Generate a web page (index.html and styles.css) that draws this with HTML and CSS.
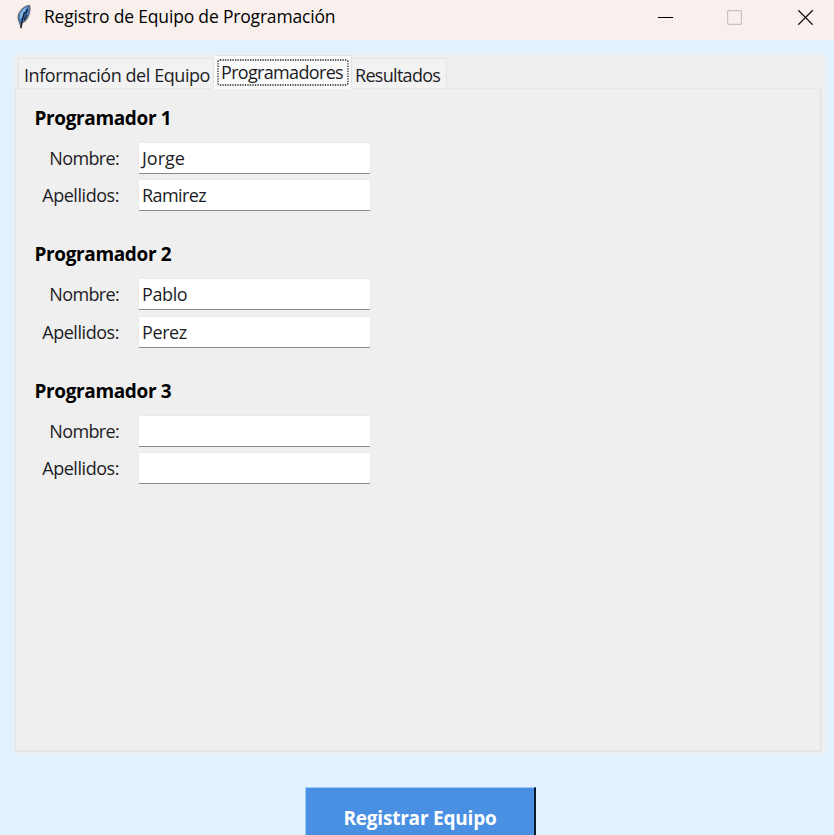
FILE: index.html
```html
<!DOCTYPE html>
<html lang="es">
<head>
<meta charset="utf-8">
<title>Registro de Equipo de Programación</title>
<link rel="stylesheet" href="styles.css">
</head>
<body>
<div class="window">
  <header class="titlebar">
    <svg class="feather" width="16" height="26" viewBox="0 0 16 26">
      <path d="M13.200 1.300C8.200 2 3.500 6.500 2.200 12c-.6 3 .3 5 1.500 7L5 23l1-4c4-2 6-5 7-9 .8-3 1.400-7 .2-8.700z" fill="#3f7fcd" stroke="#69696c" stroke-width="1.300"/>
      <path d="M4 10c1-3 4-6 7-7L7 12l-3 4z" fill="#7fb0e6"/>
      <path d="M11.500 5L9.500 10M8.500 8L7 14M10.500 11l-2.500 5M6.500 14l-1.500 10" fill="none" stroke="#18222f" stroke-width="1.400"/>
    </svg>
    <h1 class="title">Registro de Equipo de Programación</h1>
    <svg class="controls" width="156" height="16" viewBox="0 0 156 16" fill="none">
      <path d="M0 8.500H15" stroke="#000"/>
      <rect x="69.600" y="1.600" width="13.800" height="13.800" rx="1" stroke="#c9c2c1" stroke-width="1.200"/>
      <path d="M140.300 1.300l14.400 14.400M154.700 1.300L140.300 15.700" stroke="#111" stroke-width="1.300"/>
    </svg>
  </header>
  <main class="notebook">
    <nav class="tabs">
      <div class="tab tab-info"><span>Información del Equipo</span></div>
      <div class="tab active"><svg class="focus" width="132" height="27"><rect x="1" y="1" width="130" height="25" rx="2" fill="none" stroke="#222" stroke-width="1.300" stroke-dasharray="1.300 1.200"/></svg><span>Programadores</span></div>
      <div class="tab tab-results"><span>Resultados</span></div>
    </nav>
    <div class="panel">
      <section class="group">
        <h2>Programador 1</h2>
        <label class="row"><span class="label nombre">Nombre:</span><span class="field jorge">Jorge</span></label>
        <label class="row"><span class="label">Apellidos:</span><span class="field ramirez">Ramirez</span></label>
      </section>
      <section class="group">
        <h2>Programador 2</h2>
        <label class="row"><span class="label nombre">Nombre:</span><span class="field">Pablo</span></label>
        <label class="row"><span class="label">Apellidos:</span><span class="field">Perez</span></label>
      </section>
      <section class="group">
        <h2>Programador 3</h2>
        <label class="row"><span class="label nombre">Nombre:</span><span class="field"></span></label>
        <label class="row"><span class="label">Apellidos:</span><span class="field"></span></label>
      </section>
    </div>
  </main>
  <div class="submit">Registrar Equipo</div>
</div>
</body>
</html>
```

FILE: styles.css
```css
* { box-sizing: border-box; }
body { margin: 0; background: #e3f1fc; font-family: "Open Sans", "Noto Sans", sans-serif; font-size: 18px; color: #1c1c24; overflow: hidden; }
h1, h2 { margin: 0; }
.window { height: 835px; overflow: hidden; white-space: nowrap; }
.titlebar { height: 40px; background: #f9f0ee; display: flex; align-items: center; padding: 0 20px 7px 16px; }
.feather { margin-top: 1px; }
.title { margin: -1px 0 0 12px; flex: 1; font-size: 17.5px; font-weight: 400; letter-spacing: -.18px; color: #000; }
.controls { flex: none; }
.notebook { margin: 15px 9px 0 15px; height: 698px; background: #efefef; padding: 0 3px 1px 0; display: flex; flex-direction: column; }
.tabs { height: 33px; display: flex; align-items: flex-end; padding-left: 3px; }
.tab { height: 30px; border: 1px solid #e4e4e4; border-bottom: 0; background: #f2f2f2; line-height: 33px; letter-spacing: -.43px; }
.tab-info { width: 195px; padding-left: 5px; border-right: 0; }
.active { width: 139px; height: 34px; margin-bottom: -1px; padding-left: 7px; background: #fafafa; position: relative; z-index: 1; line-height: 33px; letter-spacing: -.67px; }
.focus { position: absolute; left: 3px; top: 3px; }
.tab-results { width: 95px; padding-left: 3px; border-left: 0; letter-spacing: -.7px; }
.panel { flex: 1; border: 2px solid #e6e6e6; border-width: 1px 2px 2px 1px; background: #efefef; padding: 10.5px 0 0 18.5px; }
.group { height: 136.5px; }
.group h2 { font-size: 19px; line-height: 36px; height: 39.5px; font-weight: 700; letter-spacing: -.37px; color: #000; }
.row { display: flex; align-items: center; height: 37.5px; }
.label { width: 84.5px; margin-right: 19px; text-align: right; line-height: 30px; letter-spacing: -.45px; }
.nombre { letter-spacing: -.65px; }
.field { width: 233px; height: 32px; background: #fff; border: 1px solid #e9e9e9; border-bottom: 1.500px solid #8b8b8b; border-radius: 2px; line-height: 30px; padding-left: 3px; letter-spacing: -.4px; }
.jorge { letter-spacing: 0; }
.ramirez { letter-spacing: -.6px; }
.submit { width: 231px; height: 62px; margin: 34px 0 0 305px; background: #4a90e2; border: 1px solid #9ccafa; border-right: 2px solid #08192c; color: #fff; font-weight: 700; font-size: 19px; text-align: center; line-height: 60px; letter-spacing: -.2px; }
```
